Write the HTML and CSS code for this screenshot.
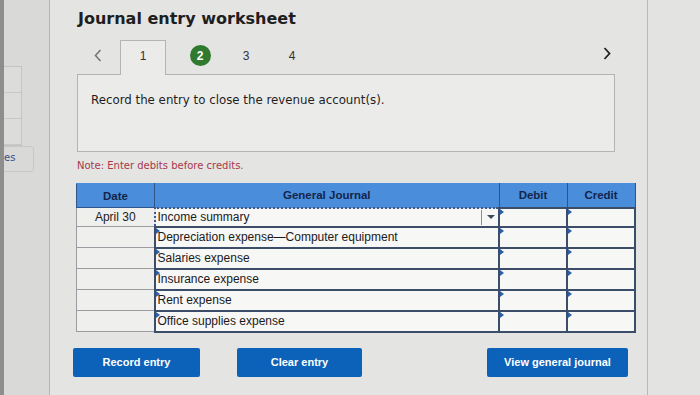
FILE: index.html
```html
<!DOCTYPE html>
<html lang="en">
<head>
    <meta charset="UTF-8">
    <meta name="viewport" content="width=device-width, initial-scale=1.0">
    <title>Journal entry worksheet</title>
    <link rel="stylesheet" href="styles.css">
</head>
<body>
    <div class="screen">
        <aside class="side-left">
            <div class="side-cells">
                <div></div>
                <div></div>
                <div></div>
            </div>
            <div class="side-tab">es</div>
        </aside>

        <main class="panel">
            <h1 class="title">Journal entry worksheet</h1>

            <!-- step navigation -->
            <div class="steps">
                <button class="step-arrow" aria-label="Previous">
                    <svg width="8" height="13" viewBox="0 0 8 13"><path d="M6.5 1 L1.5 6.5 L6.5 12" fill="none" stroke="#777" stroke-width="1.6"/></svg>
                </button>
                <div class="step step-open">1</div>
                <div class="step step-first"><span class="badge">2</span></div>
                <div class="step">3</div>
                <div class="step">4</div>
                <button class="step-arrow step-next" aria-label="Next">
                    <svg width="8" height="13" viewBox="0 0 8 13"><path d="M1.5 1 L6.5 6.5 L1.5 12" fill="none" stroke="#222" stroke-width="1.8"/></svg>
                </button>
            </div>

            <div class="prompt">Record the entry to close the revenue account(s).</div>

            <p class="note">Note: Enter debits before credits.</p>

            <table class="journal">
                <thead>
                    <tr>
                        <th class="col-date">Date</th>
                        <th class="col-account">General Journal</th>
                        <th class="col-amount">Debit</th>
                        <th class="col-amount">Credit</th>
                    </tr>
                </thead>
                <tbody>
                    <tr class="first-row">
                        <td class="date">April 30</td>
                        <td class="account focused">Income summary<span class="dropdown"></span></td>
                        <td class="amount flag"></td>
                        <td class="amount flag"></td>
                    </tr>
                    <tr>
                        <td class="date"></td>
                        <td class="account flag">Depreciation expense—Computer equipment</td>
                        <td class="amount flag"></td>
                        <td class="amount flag"></td>
                    </tr>
                    <tr>
                        <td class="date"></td>
                        <td class="account flag">Salaries expense</td>
                        <td class="amount flag"></td>
                        <td class="amount flag"></td>
                    </tr>
                    <tr>
                        <td class="date"></td>
                        <td class="account flag">Insurance expense</td>
                        <td class="amount flag"></td>
                        <td class="amount flag"></td>
                    </tr>
                    <tr>
                        <td class="date"></td>
                        <td class="account flag">Rent expense</td>
                        <td class="amount flag"></td>
                        <td class="amount flag"></td>
                    </tr>
                    <tr>
                        <td class="date"></td>
                        <td class="account flag">Office supplies expense</td>
                        <td class="amount flag"></td>
                        <td class="amount flag"></td>
                    </tr>
                </tbody>
            </table>

            <div class="actions">
                <button class="btn btn-record">Record entry</button>
                <button class="btn btn-clear">Clear entry</button>
                <button class="btn btn-view">View general journal</button>
            </div>
        </main>

        <aside class="side-right"></aside>
    </div>
</body>
</html>
```

FILE: styles.css
```css
* {
    margin: 0;
    padding: 0;
    box-sizing: border-box;
}

body {
    font-family: 'DejaVu Sans', Verdana, sans-serif;
    background-color: #dededc;
    color: #222;
    width: 700px;
    height: 395px;
    overflow: hidden;
}

.screen {
    display: flex;
    height: 395px;
}

/* left neighbour window */
.side-left {
    width: 50px;
    background: #d9d9d7;
    border-left: 4px solid #8e8e8c;
    border-right: 1px solid #b4b4b2;
    padding-top: 66px;
}

.side-cells {
    width: 18px;
    border: 1px solid #c4c4c2;
    border-left: none;
    background: #dcdcda;
}

.side-cells div {
    height: 26px;
    border-bottom: 1px solid #c8c8c6;
}

.side-tab {
    width: 30px;
    margin-top: 0;
    padding: 5px 0 8px;
    border: 1px solid #c8c8c6;
    border-left: none;
    border-radius: 0 4px 4px 0;
    font-size: 10px;
    color: #3a4f86;
}

/* main worksheet panel */
.panel {
    width: 598px;
    background: #e4e4e2;
    border-right: 1px solid #b8b8b6;
    padding: 0 12px 0 26px;
}

.title {
    font-size: 16px;
    font-weight: bold;
    color: #1e1e1e;
    padding: 9px 0 0 2px;
    height: 40px;
}

.steps {
    display: flex;
    align-items: stretch;
    height: 35px;
    margin-bottom: -1px;
    position: relative;
}

.step-arrow {
    border: none;
    background: none;
    width: 44px;
    display: flex;
    align-items: center;
    justify-content: center;
    padding-bottom: 4px;
}

.step-next {
    margin-left: auto;
    margin-right: 18px;
    width: 20px;
    padding-bottom: 8px;
}

.step {
    width: 46px;
    display: flex;
    align-items: center;
    justify-content: center;
    font-family: 'Liberation Sans', Arial, sans-serif;
    font-size: 12px;
    color: #333;
    padding-bottom: 4px;
}

.step-open {
    background: #ebebea;
    border: 1px solid #b4b4b2;
    border-bottom: none;
    margin-right: 11px;
}

.badge {
    width: 21px;
    height: 21px;
    border-radius: 50%;
    background: #2f7a2f;
    color: white;
    font-weight: bold;
    display: flex;
    align-items: center;
    justify-content: center;
}

.prompt {
    width: 538px;
    height: 78px;
    margin-left: 1px;
    background: #ebebea;
    border: 1px solid #b4b4b2;
    font-size: 11.8px;
    padding: 18px 0 0 13px;
    color: #1e1e1e;
}

.note {
    font-size: 10px;
    color: #a8384a;
    padding: 8px 0 0 1px;
    height: 31px;
}

/* journal table */
.journal {
    width: 560px;
    border-collapse: collapse;
    font-family: 'Liberation Sans', Arial, sans-serif;
    font-size: 12px;
}

.journal th {
    background: #4a8edb;
    color: #13254a;
    font-weight: bold;
    font-size: 11.5px;
    height: 24px;
    border: 1px solid #2e5488;
    border-top: 1px solid #4a8edb;
}

.col-date {
    width: 78px;
}

.col-amount {
    width: 68px;
}

.journal td {
    height: 21px;
    line-height: 14px;
    padding-top: 0;
    padding-bottom: 0;
    position: relative;
    background: #f7f7f6;
}

.journal .first-row td {
    height: 19px;
}

.journal td.date {
    background: #efefed;
    border: 1px solid #9c9ca0;
    text-align: center;
    color: #222;
}

.journal td.account,
.journal td.amount {
    border: 2px solid #3b4d68;
}

.journal td.account {
    padding-left: 2px;
    color: #1a1a1a;
}

.journal td.focused {
    border: 2px dotted #3d5a8a;
    padding-right: 22px;
}

/* small input marker in the corner of each cell */
.flag::before {
    content: "";
    position: absolute;
    left: 0;
    top: 0;
    border-top: 3px solid transparent;
    border-bottom: 3px solid transparent;
    border-left: 4px solid #2d5fa6;
}

.dropdown {
    position: absolute;
    right: 0;
    top: 1px;
    width: 17px;
    height: 15px;
    border-left: 1px solid #8e8e8e;
}

.dropdown::after {
    content: "";
    position: absolute;
    left: 5px;
    top: 5px;
    border-left: 4px solid transparent;
    border-right: 4px solid transparent;
    border-top: 4px solid #3d4a5c;
}

/* buttons */
.actions {
    display: flex;
    align-items: center;
    margin-top: 15px;
    margin-left: -3px;
}

.btn {
    background-color: #0c61b8;
    color: white;
    border: none;
    border-radius: 2px;
    height: 29px;
    font-family: 'Liberation Sans', Arial, sans-serif;
    font-size: 11px;
    font-weight: bold;
    cursor: pointer;
}

.btn-record {
    width: 127px;
}

.btn-clear {
    width: 125px;
    margin-left: 37px;
}

.btn-view {
    width: 141px;
    margin-left: auto;
    margin-right: 7px;
}

/* right neighbour */
.side-right {
    flex: 1;
    background: #e3e3e1;
}
```
